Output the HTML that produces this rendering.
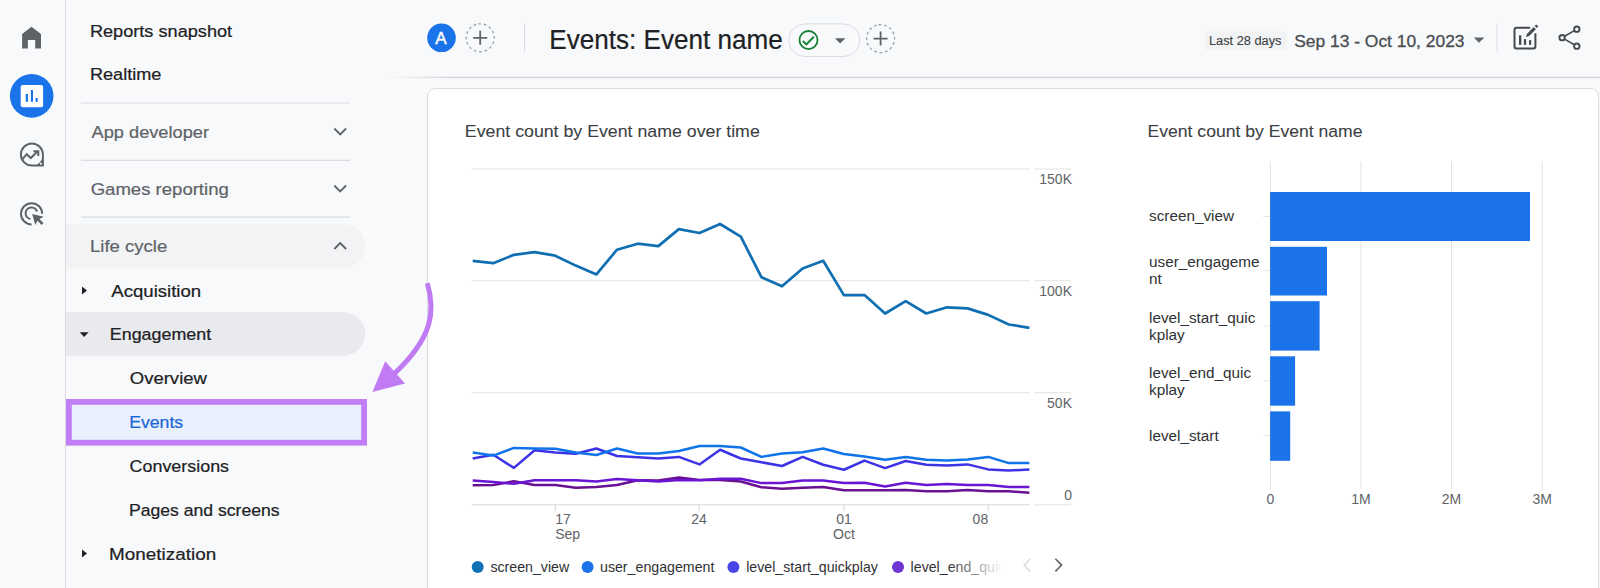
<!DOCTYPE html>
<html><head><meta charset="utf-8"><title>Events: Event name</title>
<style>
html,body{margin:0;padding:0;background:#f8f9fa;width:1600px;height:588px;overflow:hidden;}
svg{display:block;font-family:"Liberation Sans", sans-serif;}
</style></head>
<body>
<svg width="1600" height="588" viewBox="0 0 1600 588">
<line x1="65.5" y1="0" x2="65.5" y2="588" stroke="#dadce0" stroke-width="1"/>
<polygon fill="#5f6368" points="31.5,26.8 41,34.1 41,48.5 35.2,48.5 35.2,40 27.9,40 27.9,48.5 22.1,48.5 22.1,34.1"/>
<circle cx="31.7" cy="95.9" r="21.8" fill="#1a73e8"/>
<rect x="20.7" y="84.9" width="22.4" height="22.4" rx="2" fill="#fff"/>
<rect x="25.8" y="93.9" width="2.2" height="7.9" fill="#1a73e8"/>
<rect x="30.9" y="90" width="2.1" height="11.8" fill="#1a73e8"/>
<rect x="35.6" y="98" width="2.1" height="3.8" fill="#1a73e8"/>
<path fill="none" stroke="#5f6368" stroke-width="2" d="M42.9 154.6 A11 11 0 1 0 31.9 165.6 L42.9 165.6 Z"/>
<path fill="#5f6368" d="M31.9 165.6 A11 11 0 0 0 42.9 154.6 L42.9 165.6 Z"/>
<rect x="40" y="162.8" width="1.8" height="1.8" fill="#f8f9fa"/>
<polyline fill="none" stroke="#5f6368" stroke-width="2" points="22.7,158.8 26.7,154.2 30.8,158 37.6,151.2"/>
<polyline fill="none" stroke="#5f6368" stroke-width="2" points="33.4,151.2 38.3,151.2 38.3,156"/>
<path fill="none" stroke="#5f6368" stroke-width="2" d="M31.6 224.4 A10.6 10.6 0 1 1 42.2 213.8"/>
<path fill="none" stroke="#5f6368" stroke-width="2" d="M30.4 219.0 A5.8 5.8 0 1 1 37.0 211.6"/>
<polygon fill="#5f6368" points="32.2,213.9 35.3,225 37.5,220.7 41.6,225 43.5,223.1 39.4,219 43.7,216.8"/>
<path fill="#f1f3f4" d="M66 224 H343.2 A22.15 22.15 0 0 1 343.2 268.3 H66 Z"/>
<path fill="#e8eaed" d="M66 312.3 H343.6 A21.7 21.7 0 0 1 343.6 355.7 H66 Z"/>
<line x1="81" y1="103" x2="350" y2="103" stroke="#dadce0" stroke-width="1.2"/>
<line x1="81" y1="160.3" x2="350" y2="160.3" stroke="#dadce0" stroke-width="1.2"/>
<line x1="81" y1="217.2" x2="350" y2="217.2" stroke="#dadce0" stroke-width="1.2"/>
<text x="89.91" y="36.8" font-size="17.4" fill="#202124" font-weight="normal" textLength="142.22" lengthAdjust="spacingAndGlyphs"  stroke="#202124" stroke-width="0.22">Reports snapshot</text>
<text x="89.91" y="80.1" font-size="17.4" fill="#202124" font-weight="normal" textLength="71.49" lengthAdjust="spacingAndGlyphs"  stroke="#202124" stroke-width="0.22">Realtime</text>
<text x="91.56" y="138.1" font-size="17.4" fill="#5f6368" font-weight="normal" textLength="117.44" lengthAdjust="spacingAndGlyphs"  stroke="#5f6368" stroke-width="0.22">App developer</text>
<text x="90.67" y="195.3" font-size="17.4" fill="#5f6368" font-weight="normal" textLength="138.13" lengthAdjust="spacingAndGlyphs"  stroke="#5f6368" stroke-width="0.22">Games reporting</text>
<text x="90.08" y="252.2" font-size="17.4" fill="#5f6368" font-weight="normal" textLength="77.14" lengthAdjust="spacingAndGlyphs"  stroke="#5f6368" stroke-width="0.22">Life cycle</text>
<polyline fill="none" stroke="#5f6368" stroke-width="1.8" points="334.3,128.5 340.2,134.4 346.1,128.5"/>
<polyline fill="none" stroke="#5f6368" stroke-width="1.8" points="334.3,185.5 340.2,191.4 346.1,185.5"/>
<polyline fill="none" stroke="#5f6368" stroke-width="1.8" points="334.3,249 340.2,243.1 346.1,249"/>
<text x="111.26" y="296.8" font-size="17.4" fill="#202124" font-weight="normal" textLength="89.94" lengthAdjust="spacingAndGlyphs"  stroke="#202124" stroke-width="0.22">Acquisition</text>
<text x="109.83" y="340.2" font-size="17.4" fill="#202124" font-weight="normal" textLength="101.30" lengthAdjust="spacingAndGlyphs"  stroke="#202124" stroke-width="0.22">Engagement</text>
<text x="129.72" y="384.0" font-size="17.4" fill="#202124" font-weight="normal" textLength="77.23" lengthAdjust="spacingAndGlyphs"  stroke="#202124" stroke-width="0.22">Overview</text>
<rect x="68.9" y="401.9" width="295.2" height="40.8" fill="#e8f0fe" stroke="#c27ef5" stroke-width="5.8"/>
<text x="129.15" y="428.1" font-size="17.4" fill="#1967d2" font-weight="normal" textLength="53.99" lengthAdjust="spacingAndGlyphs"  stroke="#1967d2" stroke-width="0.22">Events</text>
<text x="129.59" y="471.6" font-size="17.4" fill="#202124" font-weight="normal" textLength="99.46" lengthAdjust="spacingAndGlyphs"  stroke="#202124" stroke-width="0.22">Conversions</text>
<text x="129.06" y="516.1" font-size="17.4" fill="#202124" font-weight="normal" textLength="150.58" lengthAdjust="spacingAndGlyphs"  stroke="#202124" stroke-width="0.22">Pages and screens</text>
<text x="109.05" y="559.8" font-size="17.4" fill="#202124" font-weight="normal" textLength="107.18" lengthAdjust="spacingAndGlyphs"  stroke="#202124" stroke-width="0.22">Monetization</text>
<polygon fill="#202124" points="82,286.6 87,290.5 82,294.4"/>
<polygon fill="#202124" points="79.7,332.2 88.6,332.2 84.15,337"/>
<polygon fill="#202124" points="82,549.6 87,553.5 82,557.4"/>
<defs><linearGradient id="hl" x1="0" x2="1"><stop offset="0" stop-color="#d3d5d8" stop-opacity="0"/><stop offset="1" stop-color="#d3d5d8" stop-opacity="1"/></linearGradient></defs>
<rect x="388" y="76.7" width="60" height="1.4" fill="url(#hl)"/>
<rect x="448" y="76.7" width="1152" height="1.4" fill="#d3d5d8"/>
<circle cx="441.5" cy="37.8" r="14.3" fill="#1a73e8"/>
<text x="435.37" y="43.7" font-size="17.3" fill="#fff" font-weight="normal" textLength="11.37" lengthAdjust="spacingAndGlyphs"  stroke="#fff" stroke-width="0.45">A</text>
<circle cx="480.2" cy="37.8" r="14" fill="none" stroke="#9aa0a6" stroke-width="1.3" stroke-dasharray="2.75 2.75" transform="rotate(-98 480.2 37.8)"/>
<path stroke="#5f6368" stroke-width="1.8" d="M473.2 37.8 H487.2 M480.2 30.799999999999997 V44.8"/>
<circle cx="880.6" cy="38.6" r="14" fill="none" stroke="#9aa0a6" stroke-width="1.3" stroke-dasharray="2.75 2.75" transform="rotate(-98 880.6 38.6)"/>
<path stroke="#5f6368" stroke-width="1.8" d="M873.6 38.6 H887.6 M880.6 31.6 V45.6"/>
<line x1="524.6" y1="23.2" x2="524.6" y2="52.2" stroke="#dadce0" stroke-width="1"/>
<text x="549.36" y="49" font-size="26.8" fill="#202124" font-weight="normal" textLength="233.50" lengthAdjust="spacingAndGlyphs"  stroke="#202124" stroke-width="0.22">Events: Event name</text>
<rect x="788.7" y="23.9" width="71.2" height="32.6" rx="16.3" fill="none" stroke="#dadce0" stroke-width="1"/>
<circle cx="808.5" cy="40.05" r="9.05" fill="none" stroke="#188038" stroke-width="1.8"/>
<polyline fill="none" stroke="#188038" stroke-width="2" points="802.9,41.1 806.4,44.4 813.8,36.7"/>
<polygon fill="#5f6368" points="835,38.3 845.3,38.3 840.15,43.6"/>
<rect x="1205" y="31.25" width="81.75" height="18.75" fill="#f1f3f4"/>
<text x="1208.95" y="45" font-size="12.5" fill="#3c4043" font-weight="normal" textLength="72.51" lengthAdjust="spacingAndGlyphs"  stroke="#3c4043" stroke-width="0.1">Last 28 days</text>
<text x="1294.21" y="47" font-size="17.1" fill="#4a4d51" font-weight="normal" textLength="170.31" lengthAdjust="spacingAndGlyphs"  stroke="#4a4d51" stroke-width="0.3">Sep 13 - Oct 10, 2023</text>
<polygon fill="#5f6368" points="1473.8,37.5 1484.3,37.5 1479,42.8"/>
<line x1="1497" y1="23.7" x2="1497" y2="52" stroke="#dadce0" stroke-width="1"/>
<path fill="none" stroke="#474a4d" stroke-width="2" d="M1530.2 27.8 H1516.5 a2 2 0 0 0 -2 2 V46.6 a2 2 0 0 0 2 2 H1533.4 a2 2 0 0 0 2 -2 V33.3"/>
<rect x="1519" y="35.3" width="2.3" height="9.6" fill="#474a4d"/>
<rect x="1523.9" y="39.1" width="2.2" height="5.8" fill="#474a4d"/>
<rect x="1529" y="40.1" width="2.2" height="4.8" fill="#474a4d"/>
<polygon fill="#474a4d" points="1526,37 1526.9,33.9 1533.7,27.1 1535.9,29.3 1529.1,36.1"/>
<polygon fill="#474a4d" points="1534.6,25.9 1536.1,24.4 1538.3,26.6 1536.8,28.1"/>
<circle cx="1576.8" cy="29.2" r="2.7" fill="none" stroke="#474a4d" stroke-width="1.9"/>
<circle cx="1562.1" cy="37.7" r="2.7" fill="none" stroke="#474a4d" stroke-width="1.9"/>
<circle cx="1576.8" cy="46.2" r="2.7" fill="none" stroke="#474a4d" stroke-width="1.9"/>
<path stroke="#474a4d" stroke-width="1.6" d="M1564.5 36.3 L1574.4 30.6 M1564.5 39.1 L1574.4 44.8"/>
<rect x="427.5" y="88.5" width="1171" height="560" rx="8" fill="#fff" stroke="#dadce0" stroke-width="1"/>
<text x="464.84" y="136.6" font-size="17" fill="#3c4043" font-weight="normal" textLength="294.94" lengthAdjust="spacingAndGlyphs"  stroke="#3c4043" stroke-width="0.08">Event count by Event name over time</text>
<line x1="471.8" y1="169" x2="1029.6" y2="169" stroke="#e3e3e3" stroke-width="1"/>
<line x1="1034.4" y1="169" x2="1071" y2="169" stroke="#e3e3e3" stroke-width="1"/>
<line x1="471.8" y1="280.7" x2="1029.6" y2="280.7" stroke="#e3e3e3" stroke-width="1"/>
<line x1="1034.4" y1="280.7" x2="1071" y2="280.7" stroke="#e3e3e3" stroke-width="1"/>
<line x1="471.8" y1="392.7" x2="1029.6" y2="392.7" stroke="#e3e3e3" stroke-width="1"/>
<line x1="1034.4" y1="392.7" x2="1071" y2="392.7" stroke="#e3e3e3" stroke-width="1"/>
<line x1="471.8" y1="504.8" x2="1029.6" y2="504.8" stroke="#d6d6d6" stroke-width="1"/>
<line x1="1034.4" y1="504.8" x2="1071" y2="504.8" stroke="#e3e3e3" stroke-width="1"/>
<text x="1072" y="184" font-size="14" fill="#5f6368" text-anchor="end" font-weight="normal" >150K</text>
<text x="1072" y="295.8" font-size="14" fill="#5f6368" text-anchor="end" font-weight="normal" >100K</text>
<text x="1072" y="408.3" font-size="14" fill="#5f6368" text-anchor="end" font-weight="normal" >50K</text>
<text x="1072" y="500.2" font-size="14" fill="#5f6368" text-anchor="end" font-weight="normal" >0</text>
<line x1="555.2" y1="504.8" x2="555.2" y2="511.5" stroke="#d6d6d6" stroke-width="1"/>
<line x1="699" y1="504.8" x2="699" y2="511.5" stroke="#d6d6d6" stroke-width="1"/>
<line x1="844" y1="504.8" x2="844" y2="511.5" stroke="#d6d6d6" stroke-width="1"/>
<line x1="988.2" y1="504.8" x2="988.2" y2="511.5" stroke="#d6d6d6" stroke-width="1"/>
<text x="555.2" y="524.4" font-size="14" fill="#5f6368" text-anchor="start" font-weight="normal" >17</text>
<text x="555.2" y="539" font-size="14" fill="#5f6368" text-anchor="start" font-weight="normal" >Sep</text>
<text x="699" y="524.4" font-size="14" fill="#5f6368" text-anchor="middle" font-weight="normal" >24</text>
<text x="844" y="524.4" font-size="14" fill="#5f6368" text-anchor="middle" font-weight="normal" >01</text>
<text x="844" y="539" font-size="14" fill="#5f6368" text-anchor="middle" font-weight="normal" >Oct</text>
<text x="988.2" y="524.4" font-size="14" fill="#5f6368" text-anchor="end" font-weight="normal" >08</text>
<polyline fill="none" stroke="#6a1092" stroke-width="2.5" stroke-linejoin="round" points="472.7,485.25 493.3,485 513.9,481.25 534.6,485 555.2,485 575.8,487.75 596.4,486.9 617.0,485 637.7,480.25 658.3,480.5 678.9,477.5 699.5,480 720.1,480 740.8,481.5 761.4,487.25 782.0,488.75 802.6,487.75 823.2,486.9 843.9,490.25 864.5,490.25 885.1,490.25 905.7,490 926.3,491.25 947.0,491.25 967.6,490 988.2,491.25 1008.8,491.25 1029.4,492.75"/>
<polyline fill="none" stroke="#6a14d4" stroke-width="2.5" stroke-linejoin="round" points="472.7,480.6 493.3,481.9 513.9,483.75 534.6,480.25 555.2,480.25 575.8,480.25 596.4,481.5 617.0,479 637.7,480.25 658.3,481.5 678.9,480 699.5,480.25 720.1,478.75 740.8,478.75 761.4,483.1 782.0,483.1 802.6,480.6 823.2,480.6 843.9,482.9 864.5,482.75 885.1,486.5 905.7,482.75 926.3,485 947.0,484 967.6,485 988.2,485 1008.8,486.9 1029.4,486.9"/>
<polyline fill="none" stroke="#3d33e6" stroke-width="2.5" stroke-linejoin="round" points="472.7,458.5 493.3,454.75 513.9,467.9 534.6,450.25 555.2,452.5 575.8,453.75 596.4,448.5 617.0,456 637.7,457.25 658.3,458.5 678.9,456.9 699.5,464.4 720.1,449.75 740.8,458.5 761.4,462.25 782.0,466 802.6,456.9 823.2,464.75 843.9,469.75 864.5,460.6 885.1,468.1 905.7,461 926.3,464.75 947.0,465.6 967.6,464.4 988.2,469.4 1008.8,470.6 1029.4,469.4"/>
<polyline fill="none" stroke="#0f73ea" stroke-width="2.5" stroke-linejoin="round" points="472.7,452.5 493.3,455.6 513.9,447.9 534.6,448.4 555.2,448.75 575.8,452.5 596.4,455 617.0,448.5 637.7,453.5 658.3,453.5 678.9,451 699.5,446 720.1,446 740.8,447.5 761.4,456.9 782.0,453.5 802.6,452.25 823.2,448.5 843.9,454 864.5,456.5 885.1,459.75 905.7,456.9 926.3,459.75 947.0,460.6 967.6,459.4 988.2,456.9 1008.8,463.1 1029.4,463.1"/>
<polyline fill="none" stroke="#0f6fb2" stroke-width="2.7" stroke-linejoin="round" points="472.7,260.9 493.3,263.2 513.9,254.8 534.6,252.1 555.2,255.7 575.8,265.6 596.4,274.4 617.0,249.7 637.7,243.7 658.3,246.1 678.9,229.1 699.5,233 720.1,224 740.8,236.6 761.4,277.2 782.0,286.3 802.6,268.4 823.2,260.8 843.9,295.1 864.5,295.1 885.1,313.5 905.7,301.2 926.3,313.5 947.0,307.3 967.6,308.4 988.2,314.9 1008.8,324.5 1029.4,327.8"/>
<defs><linearGradient id="fade" gradientUnits="userSpaceOnUse" x1="948" y1="0" x2="1003" y2="0"><stop offset="0" stop-color="#303134" stop-opacity="1"/><stop offset="1" stop-color="#303134" stop-opacity="0"/></linearGradient></defs>
<circle cx="477.7" cy="567" r="6" fill="#1271b5"/>
<text x="490.4" y="572" font-size="14.2" fill="#303134" text-anchor="start" font-weight="normal" >screen_view</text>
<circle cx="587.6" cy="567" r="6" fill="#1a73e8"/>
<text x="600" y="572" font-size="14.2" fill="#303134" text-anchor="start" font-weight="normal" >user_engagement</text>
<circle cx="733.4" cy="567" r="6" fill="#4845e6"/>
<text x="746.2" y="572" font-size="14.2" fill="#303134" text-anchor="start" font-weight="normal" >level_start_quickplay</text>
<circle cx="898" cy="567" r="6" fill="#6f35d0"/>
<clipPath id="lc"><rect x="905" y="550" width="97" height="30"/></clipPath>
<g clip-path="url(#lc)"><text x="910.6" y="572" font-size="14.2" fill="url(#fade)">level_end_quickplay</text></g>
<polyline fill="none" stroke="#dadce0" stroke-width="1.6" points="1030.3,558.8 1024.1,565.1 1030.3,571.4"/>
<polyline fill="none" stroke="#5f6368" stroke-width="1.6" points="1055.4,558.8 1061.6,565.1 1055.4,571.4"/>
<text x="1147.56" y="136.6" font-size="17" fill="#3c4043" font-weight="normal" textLength="214.92" lengthAdjust="spacingAndGlyphs"  stroke="#3c4043" stroke-width="0.08">Event count by Event name</text>
<line x1="1270.4" y1="161.5" x2="1270.4" y2="489.5" stroke="#e3e3e3" stroke-width="1"/>
<line x1="1361" y1="161.5" x2="1361" y2="489.5" stroke="#e3e3e3" stroke-width="1"/>
<line x1="1451.5" y1="161.5" x2="1451.5" y2="489.5" stroke="#e3e3e3" stroke-width="1"/>
<line x1="1542.2" y1="161.5" x2="1542.2" y2="489.5" stroke="#e3e3e3" stroke-width="1"/>
<rect x="1270.1" y="192" width="259.9" height="49.0" fill="#1a73e8"/>
<rect x="1270.1" y="246.8" width="56.9" height="48.7" fill="#1a73e8"/>
<rect x="1270.1" y="301.2" width="49.5" height="49.4" fill="#1a73e8"/>
<rect x="1270.1" y="356.3" width="25.0" height="49.4" fill="#1a73e8"/>
<rect x="1270.1" y="411.4" width="20.1" height="49.4" fill="#1a73e8"/>
<line x1="1263" y1="216.5" x2="1270" y2="216.5" stroke="#e3e3e3" stroke-width="1"/>
<line x1="1263" y1="270.7" x2="1270" y2="270.7" stroke="#e3e3e3" stroke-width="1"/>
<line x1="1263" y1="326" x2="1270" y2="326" stroke="#e3e3e3" stroke-width="1"/>
<line x1="1263" y1="380.8" x2="1270" y2="380.8" stroke="#e3e3e3" stroke-width="1"/>
<line x1="1263" y1="435.5" x2="1270" y2="435.5" stroke="#e3e3e3" stroke-width="1"/>
<text x="1149" y="220.8" font-size="15.3" fill="#303134" text-anchor="start" font-weight="normal" >screen_view</text>
<text x="1149" y="266.7" font-size="15.3" fill="#303134" text-anchor="start" font-weight="normal" >user_engageme</text>
<text x="1149" y="283.9" font-size="15.3" fill="#303134" text-anchor="start" font-weight="normal" >nt</text>
<text x="1149" y="322.9" font-size="15.3" fill="#303134" text-anchor="start" font-weight="normal" >level_start_quic</text>
<text x="1149" y="340.4" font-size="15.3" fill="#303134" text-anchor="start" font-weight="normal" >kplay</text>
<text x="1149" y="378" font-size="15.3" fill="#303134" text-anchor="start" font-weight="normal" >level_end_quic</text>
<text x="1149" y="395" font-size="15.3" fill="#303134" text-anchor="start" font-weight="normal" >kplay</text>
<text x="1149" y="441.2" font-size="15.3" fill="#303134" text-anchor="start" font-weight="normal" >level_start</text>
<text x="1270.4" y="503.7" font-size="14" fill="#5f6368" text-anchor="middle" font-weight="normal" >0</text>
<text x="1361" y="503.7" font-size="14" fill="#5f6368" text-anchor="middle" font-weight="normal" >1M</text>
<text x="1451.5" y="503.7" font-size="14" fill="#5f6368" text-anchor="middle" font-weight="normal" >2M</text>
<text x="1542.2" y="503.7" font-size="14" fill="#5f6368" text-anchor="middle" font-weight="normal" >3M</text>
<path fill="none" stroke="#c07af3" stroke-width="5" d="M427.3 283.1 C435.5 311, 433 337, 395 373"/>
<polygon fill="#c07af3" points="372.4,392 385.2,361.2 405,383.5"/>
</svg>
</body></html>
